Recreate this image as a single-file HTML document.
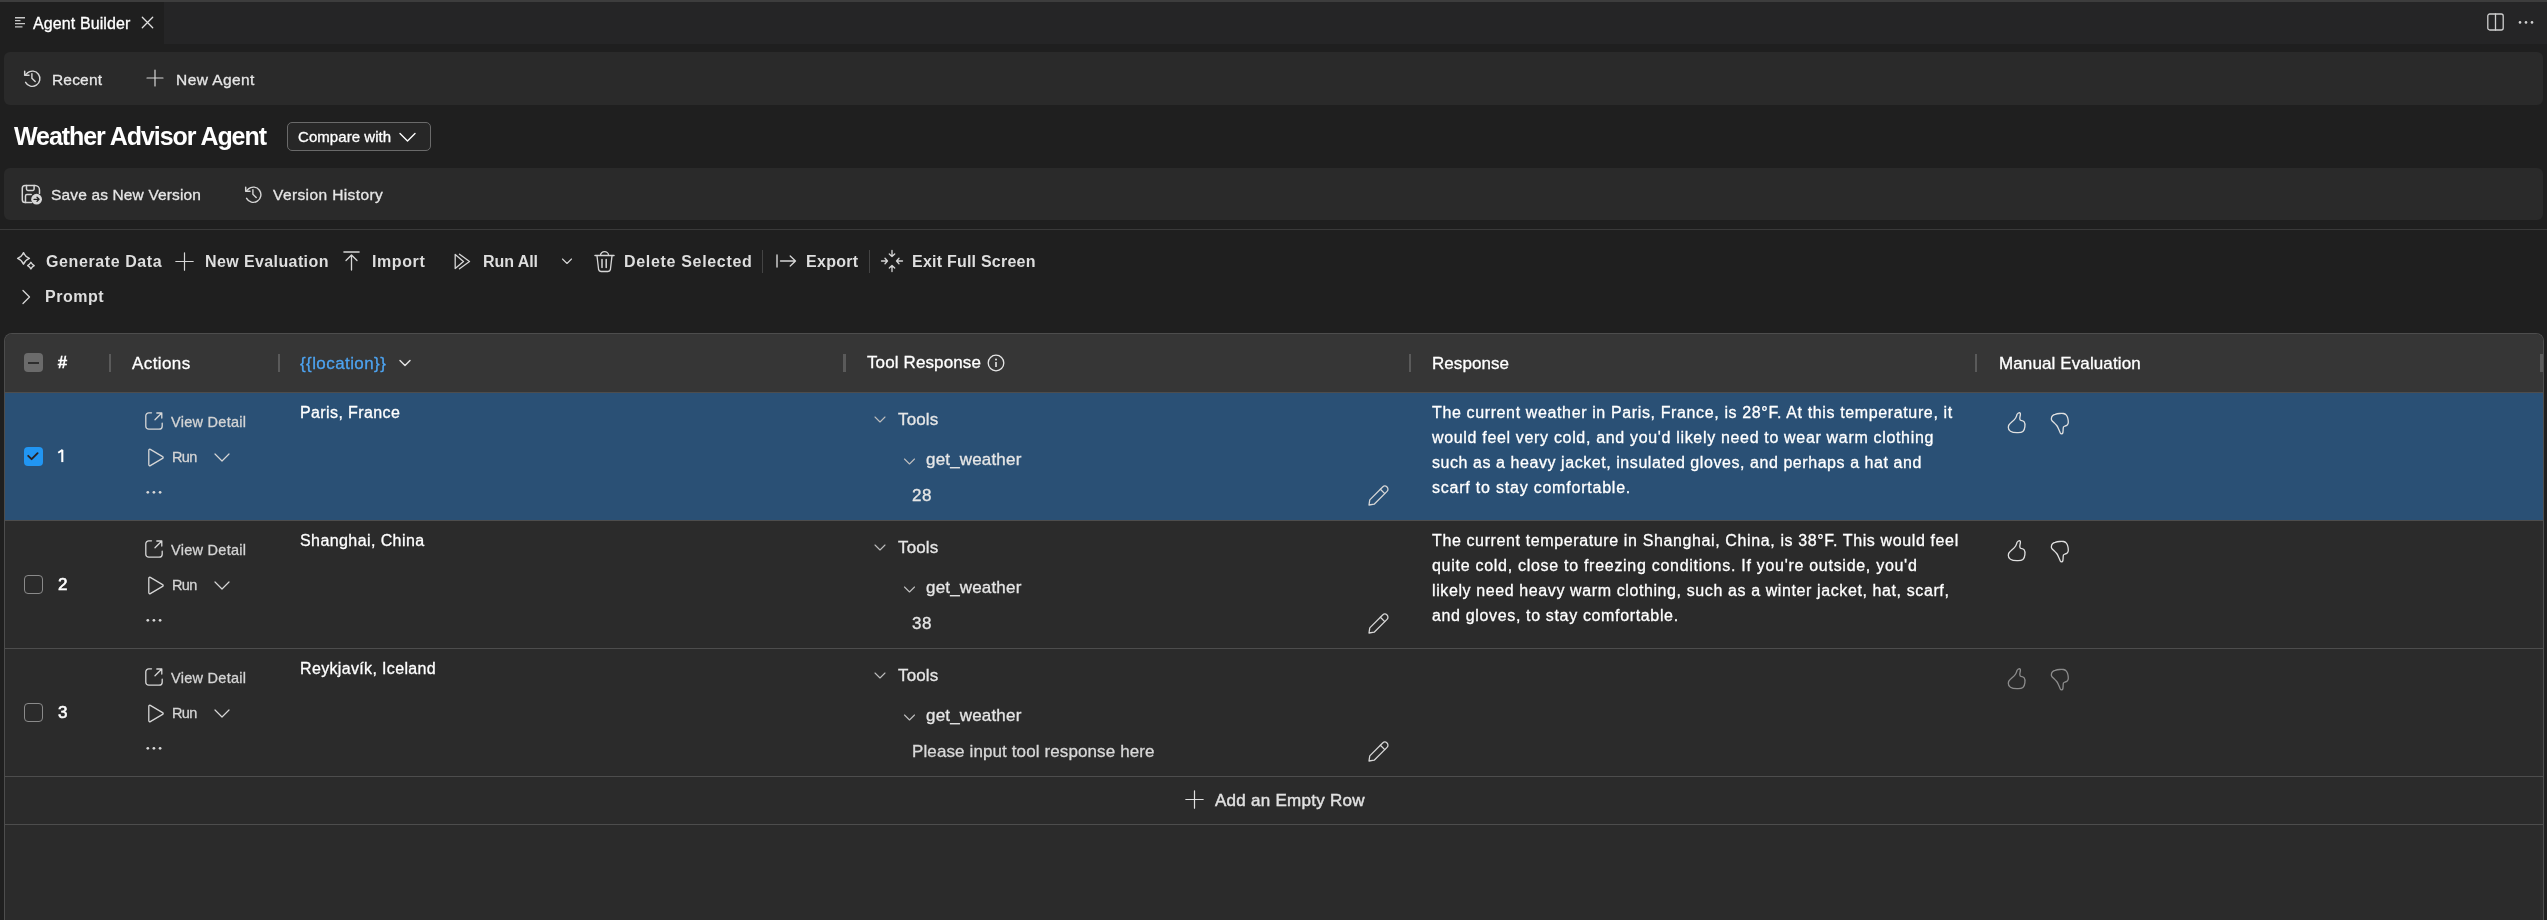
<!DOCTYPE html>
<html><head><meta charset="utf-8"><style>
html,body{margin:0;padding:0;}
body{width:2547px;height:920px;overflow:hidden;background:#1f1f1f;position:relative;font-family:"Liberation Sans",sans-serif;}
.t{position:absolute;white-space:nowrap;line-height:1;-webkit-font-smoothing:antialiased;will-change:transform;}
.r{position:absolute;}
.s{position:absolute;overflow:visible;}
</style></head><body>
<div class="r" style="left:0px;top:0px;width:2547px;height:2px;background:#3d3d3d;"></div>
<div class="r" style="left:0px;top:2px;width:2547px;height:42px;background:#252526;"></div>
<div class="r" style="left:0px;top:2px;width:164px;height:42px;background:#1f1f1f;"></div>
<svg class="s" style="left:14px;top:16px;" width="12" height="13" viewBox="0 0 12 13" fill="none" stroke="#d6d6d6" stroke-width="1.3" stroke-linecap="round" stroke-linejoin="round"><path d="M1,1.7H11M1,4.6H6.5M1,7.6H11M1,10.9H8.5" stroke="#c8c8c8" stroke-width="1.4" stroke-linecap="butt"/></svg>
<div class="t" style="left:32.60px;top:15.51px;font-size:16px;color:#ffffff;-webkit-text-stroke:0.3px #ffffff;letter-spacing:0.110px;">Agent Builder</div>
<svg class="s" style="left:140px;top:15px;" width="15" height="15" viewBox="0 0 15 15" fill="none" stroke="#d6d6d6" stroke-width="1.3" stroke-linecap="round" stroke-linejoin="round"><path d="M2.3,2.3L12.7,12.7M12.7,2.3L2.3,12.7" stroke="#e0e0e0" stroke-width="1.3"/></svg>
<svg class="s" style="left:2486px;top:13px;" width="19" height="18" viewBox="0 0 19 18" fill="none" stroke="#d6d6d6" stroke-width="1.3" stroke-linecap="round" stroke-linejoin="round"><rect x="1.8" y="1" width="15.4" height="16" rx="2" stroke="#cfcfcf" stroke-width="1.3"/><path d="M9.5,1V17" stroke="#cfcfcf" stroke-width="1.3"/></svg>
<svg class="s" style="left:2515px;top:17px;" width="22" height="10" viewBox="0 0 22 10" fill="none" stroke="#d6d6d6" stroke-width="1.3" stroke-linecap="round" stroke-linejoin="round"><circle cx="5" cy="5.4" r="1.3" fill="#d0d0d0" stroke="none"/><circle cx="11" cy="5.4" r="1.3" fill="#d0d0d0" stroke="none"/><circle cx="17" cy="5.4" r="1.3" fill="#d0d0d0" stroke="none"/></svg>
<div class="r" style="left:4px;top:52px;width:2539px;height:53px;background:#2a2a2a;border-radius:6px;"></div>
<svg class="s" style="left:22.5px;top:69px;" width="19" height="19" viewBox="0 0 19 19" fill="none" stroke="#d6d6d6" stroke-width="1.3" stroke-linecap="round" stroke-linejoin="round"><path d="M2.6,13.3A7.6,7.6 0 1 0 4.4,3.9L2.2,5.9" stroke-width="1.4"/><path d="M1.7,2.2V6.3H6" stroke-width="1.5" stroke-linecap="round"/><path d="M8.9,4.6V9.3L12.2,12.6" stroke-width="1.4"/></svg>
<div class="t" style="left:51.90px;top:71.88px;font-size:15.5px;color:#e6e6e6;-webkit-text-stroke:0.3px #e6e6e6;letter-spacing:0.173px;">Recent</div>
<svg class="s" style="left:146px;top:69px;" width="18" height="18" viewBox="0 0 18 18" fill="none" stroke="#d6d6d6" stroke-width="1.3" stroke-linecap="round" stroke-linejoin="round"><path d="M9,1V17M1,9H17" stroke-width="1.2"/></svg>
<div class="t" style="left:175.60px;top:71.88px;font-size:15.5px;color:#e6e6e6;-webkit-text-stroke:0.3px #e6e6e6;letter-spacing:0.432px;">New Agent</div>
<div class="t" style="left:14.00px;top:124.24px;font-size:25px;color:#ffffff;font-weight:700;letter-spacing:-1.056px;">Weather Advisor Agent</div>
<div class="r" style="left:287px;top:122px;width:144px;height:29px;background:#272727;border:1px solid #6a6a6a;border-radius:5px;box-sizing:border-box;"></div>
<div class="t" style="left:297.60px;top:129.10px;font-size:15px;color:#ffffff;-webkit-text-stroke:0.3px #ffffff;letter-spacing:0.059px;">Compare with</div>
<svg class="s" style="left:398px;top:131px;" width="19" height="12" viewBox="0 0 19 12" fill="none" stroke="#d6d6d6" stroke-width="1.3" stroke-linecap="round" stroke-linejoin="round"><path d="M2,2.5L9.5,10L17,2.5" stroke="#ffffff" stroke-width="1.4"/></svg>
<div class="r" style="left:4px;top:168px;width:2539px;height:52px;background:#2a2a2a;border-radius:6px;"></div>
<svg class="s" style="left:22px;top:185px;" width="21" height="21" viewBox="0 0 21 21" fill="none" stroke="#d6d6d6" stroke-width="1.3" stroke-linecap="round" stroke-linejoin="round"><path d="M9.5,17.6H3.1A2.8,2.8 0 0 1 0.3,14.8V3.2A2.8,2.8 0 0 1 3.1,0.4H13A4.5,4.5 0 0 1 17.5,4.9V8.6" stroke-width="1.5"/><path d="M4.5,0.4V4.1A1.4,1.4 0 0 0 5.9,5.5H10.7A1.4,1.4 0 0 0 12.1,4.1V0.4" stroke-width="1.5"/><path d="M3.5,17.6V10.9A1.4,1.4 0 0 1 4.9,9.5H9.2" stroke-width="1.5"/><circle cx="14.6" cy="14.2" r="5.4" fill="#d8d8d8" stroke="none"/><path d="M12,14.3H17M15,12.2L17.1,14.3L15,16.4" stroke="#222" stroke-width="1.3"/></svg>
<div class="t" style="left:50.60px;top:186.68px;font-size:15.5px;color:#e6e6e6;-webkit-text-stroke:0.3px #e6e6e6;letter-spacing:0.148px;">Save as New Version</div>
<svg class="s" style="left:244px;top:184.5px;" width="19" height="19" viewBox="0 0 19 19" fill="none" stroke="#d6d6d6" stroke-width="1.3" stroke-linecap="round" stroke-linejoin="round"><path d="M2.6,13.3A7.6,7.6 0 1 0 4.4,3.9L2.2,5.9" stroke-width="1.4"/><path d="M1.7,2.2V6.3H6" stroke-width="1.5" stroke-linecap="round"/><path d="M8.9,4.6V9.3L12.2,12.6" stroke-width="1.4"/></svg>
<div class="t" style="left:273.00px;top:186.68px;font-size:15.5px;color:#e6e6e6;-webkit-text-stroke:0.3px #e6e6e6;letter-spacing:0.397px;">Version History</div>
<div class="r" style="left:0px;top:229px;width:2547px;height:1px;background:#3a3a3a;"></div>
<svg class="s" style="left:17px;top:252px;" width="18" height="19" viewBox="0 0 18 19" fill="none" stroke="#d6d6d6" stroke-width="1.3" stroke-linecap="round" stroke-linejoin="round"><path d="M6.5,0.6Q8.1,4.8 12.4,6.4Q8.1,8 6.5,12.2Q4.9,8 0.6,6.4Q4.9,4.8 6.5,0.6Z" stroke-width="1.4"/><path d="M13.9,10.3Q15,12.5 17.2,13.6Q15,14.7 13.9,16.9Q12.8,14.7 10.6,13.6Q12.8,12.5 13.9,10.3Z" stroke-width="1.4"/></svg>
<div class="t" style="left:45.70px;top:253.86px;font-size:16px;color:#dedede;font-weight:700;letter-spacing:0.597px;">Generate Data</div>
<svg class="s" style="left:175px;top:251.5px;" width="19" height="19" viewBox="0 0 19 19" fill="none" stroke="#d6d6d6" stroke-width="1.3" stroke-linecap="round" stroke-linejoin="round"><path d="M9.5,0.8V18.2M0.8,9.5H18.2" stroke-width="1.2"/></svg>
<div class="t" style="left:205.00px;top:253.86px;font-size:16px;color:#dedede;font-weight:700;letter-spacing:0.397px;">New Evaluation</div>
<svg class="s" style="left:343px;top:250px;" width="17" height="21" viewBox="0 0 17 21" fill="none" stroke="#d6d6d6" stroke-width="1.3" stroke-linecap="round" stroke-linejoin="round"><path d="M1,2H16" stroke-width="1.6"/><path d="M8.5,20V5M3,10.5L8.5,5L14,10.5" stroke-width="1.3"/></svg>
<div class="t" style="left:372.20px;top:253.66px;font-size:16px;color:#dedede;font-weight:700;letter-spacing:0.588px;">Import</div>
<svg class="s" style="left:454px;top:252.5px;" width="19" height="17" viewBox="0 0 19 17" fill="none" stroke="#d6d6d6" stroke-width="1.3" stroke-linecap="round" stroke-linejoin="round"><path d="M1.2,1.5V15.5L9.5,8.5Z"/><path d="M5.5,1.2L15.5,8.5L5.5,15.8" /></svg>
<div class="t" style="left:482.70px;top:253.66px;font-size:16px;color:#dedede;font-weight:700;letter-spacing:-0.060px;">Run All</div>
<svg class="s" style="left:561px;top:257px;" width="12" height="9" viewBox="0 0 12 9" fill="none" stroke="#d6d6d6" stroke-width="1.3" stroke-linecap="round" stroke-linejoin="round"><path d="M1.5,2L6,6.5L10.5,2" stroke-width="1.1"/></svg>
<svg class="s" style="left:593.5px;top:250.5px;" width="21" height="22" viewBox="0 0 21 22" fill="none" stroke="#d6d6d6" stroke-width="1.3" stroke-linecap="round" stroke-linejoin="round"><path d="M1,4.5H20" stroke-width="1.5"/><path d="M6.5,4.2A4,3.5 0 0 1 14.5,4.2"/><path d="M3,4.8L4.6,18.5A2.5,2.5 0 0 0 7,20.5H14A2.5,2.5 0 0 0 16.4,18.5L18,4.8"/><path d="M8,8.5V16.5M12.2,8.5V16.5" stroke-width="1.5"/></svg>
<div class="t" style="left:623.60px;top:253.66px;font-size:16px;color:#dedede;font-weight:700;letter-spacing:0.677px;">Delete Selected</div>
<div class="r" style="left:762px;top:249.5px;width:1px;height:23px;background:#444444;"></div>
<svg class="s" style="left:775px;top:253px;" width="22" height="16" viewBox="0 0 22 16" fill="none" stroke="#d6d6d6" stroke-width="1.3" stroke-linecap="round" stroke-linejoin="round"><path d="M2,2.2V13.8" stroke="#a0a0a0" stroke-width="2"/><path d="M5.5,8H20.5M15.2,3L20.5,8L15.2,13" stroke-width="1.3"/></svg>
<div class="t" style="left:805.90px;top:253.66px;font-size:16px;color:#dedede;font-weight:700;letter-spacing:0.292px;">Export</div>
<div class="r" style="left:869px;top:249.5px;width:1px;height:23px;background:#444444;"></div>
<svg class="s" style="left:881px;top:250px;" width="22" height="22" viewBox="0 0 22 22" fill="none" stroke="#d6d6d6" stroke-width="1.3" stroke-linecap="round" stroke-linejoin="round"><path d="M11,0.5V6.5M8.3,4L11,6.5L13.7,4"/><path d="M11,21.5V15.5M8.3,18L11,15.5L13.7,18"/><path d="M0.5,11H6.5M4,8.3L6.5,11L4,13.7"/><path d="M21.5,11H15.5M18,8.3L15.5,11L18,13.7"/></svg>
<div class="t" style="left:912.00px;top:253.66px;font-size:16px;color:#dedede;font-weight:700;letter-spacing:0.228px;">Exit Full Screen</div>
<svg class="s" style="left:19.8px;top:288.5px;" width="12" height="16" viewBox="0 0 12 16" fill="none" stroke="#d6d6d6" stroke-width="1.3" stroke-linecap="round" stroke-linejoin="round"><path d="M3,1.5L9.5,8L3,14.5" stroke-width="1.3"/></svg>
<div class="t" style="left:45.40px;top:288.96px;font-size:16px;color:#dedede;font-weight:700;letter-spacing:0.520px;">Prompt</div>
<div class="r" style="left:4px;top:333px;width:2540px;height:587px;background:#2b2b2b;border:1px solid #4d4d4d;border-bottom:none;border-radius:8px 8px 0 0;box-sizing:border-box;"></div>
<div class="r" style="left:5px;top:334px;width:2538px;height:58px;background:#363636;border-radius:7px 7px 0 0;"></div>
<div class="r" style="left:5px;top:392px;width:2538px;height:1px;background:#4d4d4d;"></div>
<div class="r" style="left:24px;top:353px;width:19px;height:19px;background:#6b6b6b;border-radius:4px;"></div>
<div class="r" style="left:28px;top:361.5px;width:11px;height:2px;background:#2e2e2e;"></div>
<div class="t" style="left:58.00px;top:355.36px;font-size:16px;color:#ffffff;-webkit-text-stroke:0.7px #ffffff;">#</div>
<div class="r" style="left:109px;top:354px;width:2px;height:18px;background:#5a5a5a;"></div>
<div class="r" style="left:278px;top:354px;width:2px;height:18px;background:#5a5a5a;"></div>
<div class="r" style="left:1409px;top:354px;width:2px;height:18px;background:#5a5a5a;"></div>
<div class="r" style="left:1975px;top:354px;width:2px;height:18px;background:#5a5a5a;"></div>
<div class="r" style="left:843px;top:354px;width:3px;height:18px;background:#5a5a5a;"></div>
<div class="t" style="left:132.30px;top:354.51px;font-size:17px;color:#ffffff;-webkit-text-stroke:0.3px #ffffff;letter-spacing:0.407px;">Actions</div>
<div class="t" style="left:300.00px;top:354.51px;font-size:17px;color:#4da3f0;-webkit-text-stroke:0.3px #4da3f0;letter-spacing:0.414px;">{{location}}</div>
<svg class="s" style="left:398px;top:358px;" width="14" height="10" viewBox="0 0 14 10" fill="none" stroke="#d6d6d6" stroke-width="1.3" stroke-linecap="round" stroke-linejoin="round"><path d="M2,2.5L7,7.5L12,2.5" stroke="#e0e0e0" stroke-width="1.5"/></svg>
<div class="t" style="left:866.90px;top:353.91px;font-size:17px;color:#ffffff;-webkit-text-stroke:0.3px #ffffff;letter-spacing:0.120px;">Tool Response</div>
<svg class="s" style="left:986.5px;top:353.5px;" width="18" height="18" viewBox="0 0 18 18" fill="none" stroke="#d6d6d6" stroke-width="1.3" stroke-linecap="round" stroke-linejoin="round"><circle cx="9" cy="9" r="7.8" stroke="#e6e6e6" stroke-width="1.3"/><path d="M9,8V13" stroke="#e6e6e6" stroke-width="1.6" stroke-linecap="butt"/><circle cx="9" cy="5.4" r="1" fill="#e6e6e6" stroke="none"/></svg>
<div class="t" style="left:1431.80px;top:354.61px;font-size:17px;color:#ffffff;-webkit-text-stroke:0.3px #ffffff;letter-spacing:0.059px;">Response</div>
<div class="t" style="left:1998.50px;top:354.61px;font-size:17px;color:#ffffff;-webkit-text-stroke:0.3px #ffffff;letter-spacing:0.112px;">Manual Evaluation</div>
<div class="r" style="left:2540px;top:354px;width:3px;height:18px;background:#5a5a5a;"></div>
<div class="r" style="left:5px;top:393px;width:2538px;height:127px;background:#2a5075;"></div>
<div class="r" style="left:5px;top:520px;width:2538px;height:1px;background:#4d4d4d;"></div>
<div class="r" style="left:24px;top:447px;width:19px;height:19px;background:#2196f3;border-radius:4px;"></div>
<svg class="s" style="left:24px;top:447px;" width="19" height="19" viewBox="0 0 19 19" fill="none" stroke="#d6d6d6" stroke-width="1.3" stroke-linecap="round" stroke-linejoin="round"><path d="M4.2,8.8L7.6,12.2L13.6,6.2" stroke="#2b2222" stroke-width="1.9"/></svg>
<svg class="s" style="left:55px;top:447px;" width="12" height="17" viewBox="0 0 12 17" fill="none" stroke="#d6d6d6" stroke-width="1.3" stroke-linecap="round" stroke-linejoin="round"><path d="M7.3,2.9V15.1" stroke="#ffffff" stroke-width="2.1" stroke-linecap="butt"/><path d="M7.6,2.9L3.2,5.8" stroke="#ffffff" stroke-width="1.9" stroke-linecap="butt"/></svg>
<svg class="s" style="left:145px;top:412px;" width="18" height="18" viewBox="0 0 18 18" fill="none" stroke="#d6d6d6" stroke-width="1.3" stroke-linecap="round" stroke-linejoin="round"><path d="M6.5,0.8H3.8A3,3 0 0 0 0.8,3.8V14.2A3,3 0 0 0 3.8,17.2H14.2A3,3 0 0 0 17.2,14.2V11.2"/><path d="M10,7.8L16.8,1M11.8,1H16.8V6"/></svg>
<div class="t" style="left:171.40px;top:414.93px;font-size:14.5px;color:#d4d4d4;-webkit-text-stroke:0.3px #d4d4d4;letter-spacing:0.282px;">View Detail</div>
<svg class="s" style="left:147px;top:448px;" width="18" height="19" viewBox="0 0 18 19" fill="none" stroke="#d6d6d6" stroke-width="1.3" stroke-linecap="round" stroke-linejoin="round"><path d="M1.8,2.2A1,1 0 0 1 3.3,1.4L15.6,8.6A1,1 0 0 1 15.6,10.4L3.3,17.6A1,1 0 0 1 1.8,16.8Z"/></svg>
<div class="t" style="left:171.50px;top:449.73px;font-size:14.5px;color:#d4d4d4;-webkit-text-stroke:0.3px #d4d4d4;letter-spacing:-0.704px;">Run</div>
<svg class="s" style="left:213px;top:452px;" width="18" height="12" viewBox="0 0 18 12" fill="none" stroke="#d6d6d6" stroke-width="1.3" stroke-linecap="round" stroke-linejoin="round"><path d="M2,2L9,9L16,2" stroke-width="1.2"/></svg>
<svg class="s" style="left:144px;top:488px;" width="20" height="8" viewBox="0 0 20 8" fill="none" stroke="#d6d6d6" stroke-width="1.3" stroke-linecap="round" stroke-linejoin="round"><circle cx="3.8" cy="4.3" r="1.35" fill="#d8d8d8" stroke="none"/><circle cx="9.9" cy="4.3" r="1.35" fill="#d8d8d8" stroke="none"/><circle cx="16.1" cy="4.3" r="1.35" fill="#d8d8d8" stroke="none"/></svg>
<div class="t" style="left:300.20px;top:405.16px;font-size:16px;color:#ffffff;-webkit-text-stroke:0.3px #ffffff;letter-spacing:0.390px;">Paris, France</div>
<svg class="s" style="left:873px;top:415px;" width="14" height="10" viewBox="0 0 14 10" fill="none" stroke="#d6d6d6" stroke-width="1.3" stroke-linecap="round" stroke-linejoin="round"><path d="M2,2L7,7L12,2" stroke="#bdbdbd" stroke-width="1.1"/></svg>
<div class="t" style="left:897.70px;top:410.51px;font-size:17px;color:#e6e6e6;-webkit-text-stroke:0.3px #e6e6e6;letter-spacing:0.151px;">Tools</div>
<svg class="s" style="left:903px;top:456.5px;" width="13" height="10" viewBox="0 0 13 10" fill="none" stroke="#d6d6d6" stroke-width="1.3" stroke-linecap="round" stroke-linejoin="round"><path d="M1.5,2L6.5,7L11.5,2" stroke="#bdbdbd" stroke-width="1.1"/></svg>
<div class="t" style="left:926.30px;top:451.31px;font-size:17px;color:#e6e6e6;-webkit-text-stroke:0.3px #e6e6e6;letter-spacing:0.172px;">get_weather</div>
<div class="t" style="left:912.00px;top:487.21px;font-size:17px;color:#e6e6e6;-webkit-text-stroke:0.3px #e6e6e6;letter-spacing:0.630px;">28</div>
<svg class="s" style="left:1368px;top:486px;" width="21" height="21" viewBox="0 0 21 21" fill="none" stroke="#d6d6d6" stroke-width="1.3" stroke-linecap="round" stroke-linejoin="round"><g transform="translate(1,19) rotate(-45)"><path d="M0,0L4.2,-3.1H22.4A3.1,3.1 0 0 1 22.4,3.1H4.2Z"/><path d="M19.2,-3.1V3.1"/></g></svg>
<div class="t" style="left:1431.80px;top:404.96px;font-size:16px;color:#ffffff;-webkit-text-stroke:0.3px #ffffff;letter-spacing:0.628px;">The current weather in Paris, France, is 28°F. At this temperature, it</div>
<div class="t" style="left:1431.88px;top:429.96px;font-size:16px;color:#ffffff;-webkit-text-stroke:0.3px #ffffff;letter-spacing:0.671px;">would feel very cold, and you'd likely need to wear warm clothing</div>
<div class="t" style="left:1431.80px;top:454.96px;font-size:16px;color:#ffffff;-webkit-text-stroke:0.3px #ffffff;letter-spacing:0.562px;">such as a heavy jacket, insulated gloves, and perhaps a hat and</div>
<div class="t" style="left:1431.80px;top:479.96px;font-size:16px;color:#ffffff;-webkit-text-stroke:0.3px #ffffff;letter-spacing:0.783px;">scarf to stay comfortable.</div>
<svg class="s" style="left:2008px;top:412px;" width="18" height="22" viewBox="0 0 18 22" fill="none" stroke="#d6d6d6" stroke-width="1.3" stroke-linecap="round" stroke-linejoin="round"><path stroke="#e0e0e0" d="M11.35,0.6 C10.2,0.8 9.5,1.6 9.1,2.3 C8.6,3.6 8.3,4.8 7.6,6 C6.6,7.8 4.4,9.4 2.6,10.9 C1.2,12 0.4,13.5 0.3,15.2 C0.3,16.8 0.8,18.3 2.4,19.2 C4,20.2 6.5,20.6 9,20.6 C11,20.7 13.4,20.6 14.9,19.4 C16.2,18.4 16.7,16.5 16.9,14.6 C17.1,12.8 17.1,11 16.2,9.8 C15.5,8.9 14.2,8.6 13,8.4 C12.1,8.1 11.8,7.4 11.8,6.4 C11.8,5 12.3,3.6 12.4,2.4 C12.5,1.4 12.1,0.6 11.35,0.6Z"/></svg>
<svg class="s" style="left:2051px;top:412.5px;" width="18" height="22" viewBox="0 0 18 22" fill="none" stroke="#d6d6d6" stroke-width="1.3" stroke-linecap="round" stroke-linejoin="round"><path stroke="#e0e0e0" d="M10.74,20.9 C10,20.8 9.5,20.3 9.1,19.6 C8.5,18.3 8,17 7.5,15.8 C6.9,14.3 6.2,12.9 5.3,12 C4.5,11 3.4,10.1 2.6,9.2 C1.8,8.6 1.1,8 0.9,7.5 C0.3,6.7 0.3,5.9 0.4,5.3 C0.5,4.2 0.9,3.3 1.5,2.7 C2.3,1.9 3.2,1.5 4.2,1.3 C5.6,0.8 7,0.6 8.6,0.5 C9.9,0.4 11.2,0.4 12.4,0.5 C13.5,0.7 14.4,1.1 15.1,1.9 C15.9,2.8 16.4,3.8 16.7,4.9 C17.1,6.3 17.3,7.8 17.3,9.2 C17.3,10.3 16.9,11.3 16.2,12 C15.6,12.6 14.8,12.8 14,13 C13.2,13.3 12.6,13.6 12.4,14.1 C12.1,15 12.1,16.2 12.1,17.4 C12,18.4 12,19.4 11.8,20.1 C11.6,20.6 11.2,20.9 10.74,20.9Z"/></svg>
<div class="r" style="left:5px;top:648px;width:2538px;height:1px;background:#4d4d4d;"></div>
<div class="r" style="left:24px;top:575px;width:19px;height:19px;background:transparent;border:1.2px solid #8a8a8a;border-radius:4px;box-sizing:border-box;"></div>
<div class="t" style="left:57.90px;top:575.91px;font-size:17px;color:#ffffff;-webkit-text-stroke:0.6px #ffffff;">2</div>
<svg class="s" style="left:145px;top:540px;" width="18" height="18" viewBox="0 0 18 18" fill="none" stroke="#d6d6d6" stroke-width="1.3" stroke-linecap="round" stroke-linejoin="round"><path d="M6.5,0.8H3.8A3,3 0 0 0 0.8,3.8V14.2A3,3 0 0 0 3.8,17.2H14.2A3,3 0 0 0 17.2,14.2V11.2"/><path d="M10,7.8L16.8,1M11.8,1H16.8V6"/></svg>
<div class="t" style="left:171.40px;top:542.93px;font-size:14.5px;color:#d4d4d4;-webkit-text-stroke:0.3px #d4d4d4;letter-spacing:0.282px;">View Detail</div>
<svg class="s" style="left:147px;top:576px;" width="18" height="19" viewBox="0 0 18 19" fill="none" stroke="#d6d6d6" stroke-width="1.3" stroke-linecap="round" stroke-linejoin="round"><path d="M1.8,2.2A1,1 0 0 1 3.3,1.4L15.6,8.6A1,1 0 0 1 15.6,10.4L3.3,17.6A1,1 0 0 1 1.8,16.8Z"/></svg>
<div class="t" style="left:171.50px;top:577.73px;font-size:14.5px;color:#d4d4d4;-webkit-text-stroke:0.3px #d4d4d4;letter-spacing:-0.704px;">Run</div>
<svg class="s" style="left:213px;top:580px;" width="18" height="12" viewBox="0 0 18 12" fill="none" stroke="#d6d6d6" stroke-width="1.3" stroke-linecap="round" stroke-linejoin="round"><path d="M2,2L9,9L16,2" stroke-width="1.2"/></svg>
<svg class="s" style="left:144px;top:616px;" width="20" height="8" viewBox="0 0 20 8" fill="none" stroke="#d6d6d6" stroke-width="1.3" stroke-linecap="round" stroke-linejoin="round"><circle cx="3.8" cy="4.3" r="1.35" fill="#d8d8d8" stroke="none"/><circle cx="9.9" cy="4.3" r="1.35" fill="#d8d8d8" stroke="none"/><circle cx="16.1" cy="4.3" r="1.35" fill="#d8d8d8" stroke="none"/></svg>
<div class="t" style="left:300.20px;top:533.16px;font-size:16px;color:#ffffff;-webkit-text-stroke:0.3px #ffffff;letter-spacing:0.414px;">Shanghai, China</div>
<svg class="s" style="left:873px;top:543px;" width="14" height="10" viewBox="0 0 14 10" fill="none" stroke="#d6d6d6" stroke-width="1.3" stroke-linecap="round" stroke-linejoin="round"><path d="M2,2L7,7L12,2" stroke="#bdbdbd" stroke-width="1.1"/></svg>
<div class="t" style="left:897.70px;top:538.51px;font-size:17px;color:#e6e6e6;-webkit-text-stroke:0.3px #e6e6e6;letter-spacing:0.151px;">Tools</div>
<svg class="s" style="left:903px;top:584.5px;" width="13" height="10" viewBox="0 0 13 10" fill="none" stroke="#d6d6d6" stroke-width="1.3" stroke-linecap="round" stroke-linejoin="round"><path d="M1.5,2L6.5,7L11.5,2" stroke="#bdbdbd" stroke-width="1.1"/></svg>
<div class="t" style="left:926.30px;top:579.31px;font-size:17px;color:#e6e6e6;-webkit-text-stroke:0.3px #e6e6e6;letter-spacing:0.172px;">get_weather</div>
<div class="t" style="left:912.00px;top:615.21px;font-size:17px;color:#e6e6e6;-webkit-text-stroke:0.3px #e6e6e6;letter-spacing:0.630px;">38</div>
<svg class="s" style="left:1368px;top:614px;" width="21" height="21" viewBox="0 0 21 21" fill="none" stroke="#d6d6d6" stroke-width="1.3" stroke-linecap="round" stroke-linejoin="round"><g transform="translate(1,19) rotate(-45)"><path d="M0,0L4.2,-3.1H22.4A3.1,3.1 0 0 1 22.4,3.1H4.2Z"/><path d="M19.2,-3.1V3.1"/></g></svg>
<div class="t" style="left:1431.80px;top:532.96px;font-size:16px;color:#ffffff;-webkit-text-stroke:0.3px #ffffff;letter-spacing:0.621px;">The current temperature in Shanghai, China, is 38°F. This would feel</div>
<div class="t" style="left:1431.80px;top:557.96px;font-size:16px;color:#ffffff;-webkit-text-stroke:0.3px #ffffff;letter-spacing:0.714px;">quite cold, close to freezing conditions. If you're outside, you'd</div>
<div class="t" style="left:1431.80px;top:582.96px;font-size:16px;color:#ffffff;-webkit-text-stroke:0.3px #ffffff;letter-spacing:0.604px;">likely need heavy warm clothing, such as a winter jacket, hat, scarf,</div>
<div class="t" style="left:1431.80px;top:607.96px;font-size:16px;color:#ffffff;-webkit-text-stroke:0.3px #ffffff;letter-spacing:0.651px;">and gloves, to stay comfortable.</div>
<svg class="s" style="left:2008px;top:540px;" width="18" height="22" viewBox="0 0 18 22" fill="none" stroke="#d6d6d6" stroke-width="1.3" stroke-linecap="round" stroke-linejoin="round"><path stroke="#e0e0e0" d="M11.35,0.6 C10.2,0.8 9.5,1.6 9.1,2.3 C8.6,3.6 8.3,4.8 7.6,6 C6.6,7.8 4.4,9.4 2.6,10.9 C1.2,12 0.4,13.5 0.3,15.2 C0.3,16.8 0.8,18.3 2.4,19.2 C4,20.2 6.5,20.6 9,20.6 C11,20.7 13.4,20.6 14.9,19.4 C16.2,18.4 16.7,16.5 16.9,14.6 C17.1,12.8 17.1,11 16.2,9.8 C15.5,8.9 14.2,8.6 13,8.4 C12.1,8.1 11.8,7.4 11.8,6.4 C11.8,5 12.3,3.6 12.4,2.4 C12.5,1.4 12.1,0.6 11.35,0.6Z"/></svg>
<svg class="s" style="left:2051px;top:540.5px;" width="18" height="22" viewBox="0 0 18 22" fill="none" stroke="#d6d6d6" stroke-width="1.3" stroke-linecap="round" stroke-linejoin="round"><path stroke="#e0e0e0" d="M10.74,20.9 C10,20.8 9.5,20.3 9.1,19.6 C8.5,18.3 8,17 7.5,15.8 C6.9,14.3 6.2,12.9 5.3,12 C4.5,11 3.4,10.1 2.6,9.2 C1.8,8.6 1.1,8 0.9,7.5 C0.3,6.7 0.3,5.9 0.4,5.3 C0.5,4.2 0.9,3.3 1.5,2.7 C2.3,1.9 3.2,1.5 4.2,1.3 C5.6,0.8 7,0.6 8.6,0.5 C9.9,0.4 11.2,0.4 12.4,0.5 C13.5,0.7 14.4,1.1 15.1,1.9 C15.9,2.8 16.4,3.8 16.7,4.9 C17.1,6.3 17.3,7.8 17.3,9.2 C17.3,10.3 16.9,11.3 16.2,12 C15.6,12.6 14.8,12.8 14,13 C13.2,13.3 12.6,13.6 12.4,14.1 C12.1,15 12.1,16.2 12.1,17.4 C12,18.4 12,19.4 11.8,20.1 C11.6,20.6 11.2,20.9 10.74,20.9Z"/></svg>
<div class="r" style="left:5px;top:776px;width:2538px;height:1px;background:#4d4d4d;"></div>
<div class="r" style="left:24px;top:703px;width:19px;height:19px;background:transparent;border:1.2px solid #8a8a8a;border-radius:4px;box-sizing:border-box;"></div>
<div class="t" style="left:57.90px;top:703.91px;font-size:17px;color:#ffffff;-webkit-text-stroke:0.6px #ffffff;">3</div>
<svg class="s" style="left:145px;top:668px;" width="18" height="18" viewBox="0 0 18 18" fill="none" stroke="#d6d6d6" stroke-width="1.3" stroke-linecap="round" stroke-linejoin="round"><path d="M6.5,0.8H3.8A3,3 0 0 0 0.8,3.8V14.2A3,3 0 0 0 3.8,17.2H14.2A3,3 0 0 0 17.2,14.2V11.2"/><path d="M10,7.8L16.8,1M11.8,1H16.8V6"/></svg>
<div class="t" style="left:171.40px;top:670.93px;font-size:14.5px;color:#d4d4d4;-webkit-text-stroke:0.3px #d4d4d4;letter-spacing:0.282px;">View Detail</div>
<svg class="s" style="left:147px;top:704px;" width="18" height="19" viewBox="0 0 18 19" fill="none" stroke="#d6d6d6" stroke-width="1.3" stroke-linecap="round" stroke-linejoin="round"><path d="M1.8,2.2A1,1 0 0 1 3.3,1.4L15.6,8.6A1,1 0 0 1 15.6,10.4L3.3,17.6A1,1 0 0 1 1.8,16.8Z"/></svg>
<div class="t" style="left:171.50px;top:705.73px;font-size:14.5px;color:#d4d4d4;-webkit-text-stroke:0.3px #d4d4d4;letter-spacing:-0.704px;">Run</div>
<svg class="s" style="left:213px;top:708px;" width="18" height="12" viewBox="0 0 18 12" fill="none" stroke="#d6d6d6" stroke-width="1.3" stroke-linecap="round" stroke-linejoin="round"><path d="M2,2L9,9L16,2" stroke-width="1.2"/></svg>
<svg class="s" style="left:144px;top:744px;" width="20" height="8" viewBox="0 0 20 8" fill="none" stroke="#d6d6d6" stroke-width="1.3" stroke-linecap="round" stroke-linejoin="round"><circle cx="3.8" cy="4.3" r="1.35" fill="#d8d8d8" stroke="none"/><circle cx="9.9" cy="4.3" r="1.35" fill="#d8d8d8" stroke="none"/><circle cx="16.1" cy="4.3" r="1.35" fill="#d8d8d8" stroke="none"/></svg>
<div class="t" style="left:300.20px;top:661.16px;font-size:16px;color:#ffffff;-webkit-text-stroke:0.3px #ffffff;letter-spacing:0.345px;">Reykjavík, Iceland</div>
<svg class="s" style="left:873px;top:671px;" width="14" height="10" viewBox="0 0 14 10" fill="none" stroke="#d6d6d6" stroke-width="1.3" stroke-linecap="round" stroke-linejoin="round"><path d="M2,2L7,7L12,2" stroke="#bdbdbd" stroke-width="1.1"/></svg>
<div class="t" style="left:897.70px;top:666.51px;font-size:17px;color:#e6e6e6;-webkit-text-stroke:0.3px #e6e6e6;letter-spacing:0.151px;">Tools</div>
<svg class="s" style="left:903px;top:712.5px;" width="13" height="10" viewBox="0 0 13 10" fill="none" stroke="#d6d6d6" stroke-width="1.3" stroke-linecap="round" stroke-linejoin="round"><path d="M1.5,2L6.5,7L11.5,2" stroke="#bdbdbd" stroke-width="1.1"/></svg>
<div class="t" style="left:926.30px;top:707.31px;font-size:17px;color:#e6e6e6;-webkit-text-stroke:0.3px #e6e6e6;letter-spacing:0.172px;">get_weather</div>
<div class="t" style="left:912.00px;top:743.21px;font-size:17px;color:#d8d8d8;-webkit-text-stroke:0.3px #d8d8d8;letter-spacing:0.113px;">Please input tool response here</div>
<svg class="s" style="left:1368px;top:742px;" width="21" height="21" viewBox="0 0 21 21" fill="none" stroke="#d6d6d6" stroke-width="1.3" stroke-linecap="round" stroke-linejoin="round"><g transform="translate(1,19) rotate(-45)"><path d="M0,0L4.2,-3.1H22.4A3.1,3.1 0 0 1 22.4,3.1H4.2Z"/><path d="M19.2,-3.1V3.1"/></g></svg>
<svg class="s" style="left:2008px;top:668px;" width="18" height="22" viewBox="0 0 18 22" fill="none" stroke="#d6d6d6" stroke-width="1.3" stroke-linecap="round" stroke-linejoin="round"><path stroke="#8c8c8c" d="M11.35,0.6 C10.2,0.8 9.5,1.6 9.1,2.3 C8.6,3.6 8.3,4.8 7.6,6 C6.6,7.8 4.4,9.4 2.6,10.9 C1.2,12 0.4,13.5 0.3,15.2 C0.3,16.8 0.8,18.3 2.4,19.2 C4,20.2 6.5,20.6 9,20.6 C11,20.7 13.4,20.6 14.9,19.4 C16.2,18.4 16.7,16.5 16.9,14.6 C17.1,12.8 17.1,11 16.2,9.8 C15.5,8.9 14.2,8.6 13,8.4 C12.1,8.1 11.8,7.4 11.8,6.4 C11.8,5 12.3,3.6 12.4,2.4 C12.5,1.4 12.1,0.6 11.35,0.6Z"/></svg>
<svg class="s" style="left:2051px;top:668.5px;" width="18" height="22" viewBox="0 0 18 22" fill="none" stroke="#d6d6d6" stroke-width="1.3" stroke-linecap="round" stroke-linejoin="round"><path stroke="#8c8c8c" d="M10.74,20.9 C10,20.8 9.5,20.3 9.1,19.6 C8.5,18.3 8,17 7.5,15.8 C6.9,14.3 6.2,12.9 5.3,12 C4.5,11 3.4,10.1 2.6,9.2 C1.8,8.6 1.1,8 0.9,7.5 C0.3,6.7 0.3,5.9 0.4,5.3 C0.5,4.2 0.9,3.3 1.5,2.7 C2.3,1.9 3.2,1.5 4.2,1.3 C5.6,0.8 7,0.6 8.6,0.5 C9.9,0.4 11.2,0.4 12.4,0.5 C13.5,0.7 14.4,1.1 15.1,1.9 C15.9,2.8 16.4,3.8 16.7,4.9 C17.1,6.3 17.3,7.8 17.3,9.2 C17.3,10.3 16.9,11.3 16.2,12 C15.6,12.6 14.8,12.8 14,13 C13.2,13.3 12.6,13.6 12.4,14.1 C12.1,15 12.1,16.2 12.1,17.4 C12,18.4 12,19.4 11.8,20.1 C11.6,20.6 11.2,20.9 10.74,20.9Z"/></svg>
<svg class="s" style="left:1185px;top:790px;" width="19" height="19" viewBox="0 0 19 19" fill="none" stroke="#d6d6d6" stroke-width="1.3" stroke-linecap="round" stroke-linejoin="round"><path d="M9.5,0.8V18.2M0.8,9.5H18.2" stroke-width="1.2" stroke="#e0e0e0"/></svg>
<div class="t" style="left:1214.50px;top:791.81px;font-size:17px;color:#e0e0e0;letter-spacing:0.266px;-webkit-text-stroke:0.45px #e0e0e0;">Add an Empty Row</div>
<div class="r" style="left:5px;top:824px;width:2538px;height:1px;background:#4d4d4d;"></div>
</body></html>
